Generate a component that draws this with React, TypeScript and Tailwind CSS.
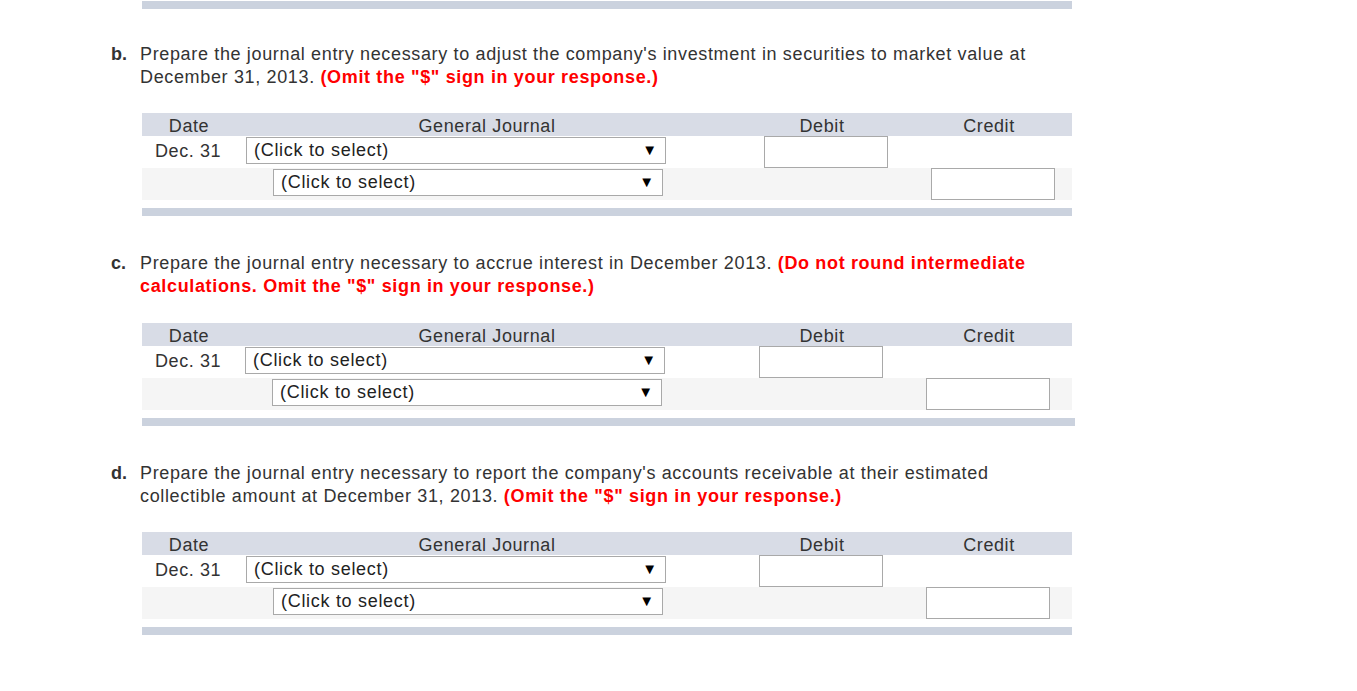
import type { ReactNode } from "react";

const font = { fontFamily: '"Liberation Sans", Arial, sans-serif' };

type Part = {
  label: string;
  text: ReactNode;
  debitX: string;
  creditX: string;
  selectX: string;
  gap: string;
  tableGap: string;
  barWide?: boolean;
};

function Select({ wide }: { wide?: boolean }) {
  return (
    <div
      className={`mt-px flex h-[27px] items-center justify-between border border-[#a9a9a9] bg-white pl-[7px] pr-[8px] text-[18px] tracking-[0.7px] text-[#222] ${
        wide ? "w-[420px]" : "ml-[27px] w-[390px]"
      }`}
    >
      <span>(Click to select)</span>
      <span className="text-[15px] tracking-normal text-black">▼</span>
    </div>
  );
}

function Box() {
  return <div className="h-[32px] w-[124px] border border-[#a9a9a9] bg-white" />;
}

function JournalTable({ part }: { part: Part }) {
  return (
    <div className="w-[930px]">
      <div className="grid h-[23px] grid-cols-[94px_502px_168px_166px] items-center bg-[#d8dce6] pb-[2px] text-[18px] tracking-[0.6px] text-[#333]">
        <div className="text-center">Date</div>
        <div className="text-center">General Journal</div>
        <div className="text-center">Debit</div>
        <div className="text-center">Credit</div>
      </div>
      <div className="flex h-[32px] items-start bg-white text-[18px] tracking-[0.6px] text-[#333]">
        <div className="w-[104px] pl-[13px] pt-[2px]">Dec. 31</div>
        <div className={part.selectX}>
          <Select wide />
        </div>
        <div className={part.debitX}>
          <Box />
        </div>
      </div>
      <div className="flex h-[32px] items-start bg-[#f5f5f5]">
        <div className="w-[104px]" />
        <div className={part.selectX}>
          <Select />
        </div>
        <div className={part.creditX}>
          <Box />
        </div>
      </div>
      <div className={`mt-[8px] h-[8px] bg-[#cbd2de] ${part.barWide ? "w-[933px]" : "w-[930px]"}`} />
    </div>
  );
}

function Question({ part }: { part: Part }) {
  return (
    <div className={part.gap}>
      <div className="-ml-[31px] flex text-[18px] leading-[23px] tracking-[0.65px] text-[#333]">
        <div className="w-[29px] font-bold tracking-normal">{part.label}</div>
        <div className="w-[935px]">{part.text}</div>
      </div>
      <div className={part.tableGap}>
        <JournalTable part={part} />
      </div>
    </div>
  );
}

const red = (s: string) => <span className="font-bold text-[#ff0000]">{s}</span>;

const parts: Part[] = [
  {
    label: "b.",
    text: (
      <>
        Prepare the journal entry necessary to adjust the company's investment in securities to market
        value at December 31, 2013. {red('(Omit the "$" sign in your response.)')}
      </>
    ),
    selectX: "",
    debitX: "ml-[98px]",
    creditX: "ml-[268px]",
    gap: "mt-[34px]",
    tableGap: "mt-[24px]",
  },
  {
    label: "c.",
    text: (
      <>
        Prepare the journal entry necessary to accrue interest in December 2013.{" "}
        {red('(Do not round intermediate calculations. Omit the "$" sign in your response.)')}
      </>
    ),
    selectX: "-ml-px",
    debitX: "ml-[94px]",
    creditX: "ml-[264px]",
    gap: "mt-[36px]",
    tableGap: "mt-[25px]",
    barWide: true,
  },
  {
    label: "d.",
    text: (
      <>
        Prepare the journal entry necessary to report the company's accounts receivable at their estimated
        collectible amount at December 31, 2013. {red('(Omit the "$" sign in your response.)')}
      </>
    ),
    selectX: "",
    debitX: "ml-[93px]",
    creditX: "ml-[263px]",
    gap: "mt-[36px]",
    tableGap: "mt-[24px]",
  },
];

export default function App() {
  return (
    <div className="min-h-[691px] w-[1357px] bg-white" style={font}>
      <div className="ml-[142px] w-[933px] pt-px">
        <div className="h-[8px] w-[930px] bg-[#cbd2de]" />
        {parts.map((p) => (
          <Question key={p.label} part={p} />
        ))}
      </div>
    </div>
  );
}
